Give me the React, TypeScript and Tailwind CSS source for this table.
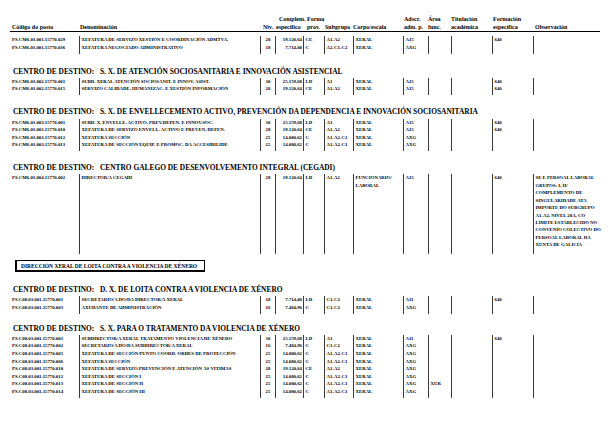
import React from "react";

const GRID =
  "grid grid-cols-[67px_181px_15px_28px_21px_29px_50px_25px_23px_41px_41px_67px]";

type R = {
  code: string;
  den: string;
  niv: string;
  comp: string;
  forma: string;
  sub: string;
  corpo: React.ReactNode;
  adscr: string;
  area?: string;
  tit?: string;
  form?: string;
  obs?: React.ReactNode;
  tall?: boolean;
};

const bar = "border-l border-[#3a3a3a]";

function Row({ r }: { r: R }) {
  const cell = "text-[4.8px] leading-[7.6px] font-bold whitespace-nowrap";
  return (
    <div className={`${GRID} ${r.tall ? "h-[77px]" : "h-[7.6px]"}`}>
      <div className={`${cell}`}>{r.code}</div>
      <div className={`${cell} ${bar} pl-[1.5px]`}>{r.den}</div>
      <div className={`${cell} ${bar} text-center`}>{r.niv}</div>
      <div className={`${cell} ${bar} text-right pr-[1px]`}>{r.comp}</div>
      <div className={`${cell} ${bar} pl-[1.5px]`}>{r.forma}</div>
      <div className={`${cell} ${bar} pl-[1.5px]`}>{r.sub}</div>
      <div className={`${cell} ${bar} pl-[1.5px]`}>{r.corpo}</div>
      <div className={`${cell} ${bar} pl-[1.5px]`}>{r.adscr}</div>
      <div className={`${cell} ${bar} pl-[1.5px]`}>{r.area ?? ""}</div>
      <div className={`${cell} ${bar} pl-[1.5px]`}>{r.tit ?? ""}</div>
      <div className={`${cell} ${bar} pl-[1.5px]`}>{r.form ?? ""}</div>
      <div className={`text-[4.8px] leading-[7.4px] font-bold whitespace-nowrap ${bar} pl-[1.5px]`}>
        {r.obs ?? ""}
      </div>
    </div>
  );
}

function Spacer() {
  return (
    <div className={`${GRID} h-[2.4px]`}>
      <div />
      {Array.from({ length: 11 }).map((_, i) => (
        <div key={i} className={bar} />
      ))}
    </div>
  );
}

function Rows({ rows }: { rows: R[] }) {
  return (
    <div className="mt-[1.2px]">
      {rows.map((r, i) => (
        <Row key={i} r={r} />
      ))}
      <Spacer />
    </div>
  );
}

function Heading({ name, mt }: { name: string; mt: string }) {
  return (
    <div className={`${mt} h-[10px] leading-[10px] text-[7.4px] font-bold pl-[1px] whitespace-nowrap`}>
      <span className="inline-block w-[87px]">CENTRO DE DESTINO:</span>
      <span>{name}</span>
    </div>
  );
}

const HL = "text-[6px] leading-[8px] font-bold whitespace-nowrap";

function Header() {
  return (
    <div className="pt-[15px] ml-[10px] w-[590px] border-b border-black">
      <div className={`${GRID} pl-[2px] items-end`}>
        <div className={HL}>Código do posto</div>
        <div className={`${HL} pl-[1px]`}>Denominación</div>
        <div className={`${HL} pl-[3px]`}>Niv.</div>
        <div>
          <div className={`${HL} pl-[4px]`}>Complem.</div>
          <div className={`${HL} pl-[1px]`}>específico</div>
        </div>
        <div>
          <div className={`${HL} pl-[4px]`}>Forma</div>
          <div className={`${HL} pl-[4px]`}>prov.</div>
        </div>
        <div className={`${HL} pl-[1px]`}>Subgrupo</div>
        <div className={`${HL} pl-[0px]`}>Corpo/escala</div>
        <div>
          <div className={`${HL} pl-[1px]`}>Adscr.</div>
          <div className={`${HL} pl-[1px]`}>adm. p.</div>
        </div>
        <div>
          <div className={HL}>Área</div>
          <div className={HL}>func.</div>
        </div>
        <div>
          <div className={HL}>Titulación</div>
          <div className={HL}>académica</div>
        </div>
        <div>
          <div className={`${HL} pl-[1px]`}>Formación</div>
          <div className={`${HL} pl-[1px]`}>específica</div>
        </div>
        <div className={`${HL} pl-[2px]`}>Observación</div>
      </div>
    </div>
  );
}

const s0: R[] = [
  { code: "PS.CM6.03.001.15770.029", den: "XEFATURA DE SERVIZO XESTIÓN E COORDINACIÓN ADMTVA.", niv: "28", comp: "19.120,64", forma: "CE", sub: "A1-A2", corpo: "XERAL", adscr: "A15", form: "640" },
  { code: "PS.CM6.03.001.15770.036", den: "XEFATURA NEGOCIADO ADMINISTRATIVO", niv: "18", comp: "7.714,00", forma: "C", sub: "A2-C1-C2", corpo: "XERAL", adscr: "AXG" },
];

const s1: R[] = [
  { code: "PS.CM6.03.002.15770.001", den: "SUBD. XERAL ATENCIÓN SOCIOSANIT. E INNOV. ASIST.", niv: "30", comp: "25.159,68", forma: "LD", sub: "A1", corpo: "XERAL", adscr: "A15", form: "640" },
  { code: "PS.CM6.03.002.15770.015", den: "SERVIZO CALIDADE, HUMANIZAC. E XESTIÓN INFORMACIÓN", niv: "28", comp: "19.120,64", forma: "CE", sub: "A1-A2", corpo: "XERAL", adscr: "A15", form: "640" },
];

const s2: R[] = [
  { code: "PS.CM6.03.003.15770.001", den: "SUBD. X. ENVELLE. ACTIVO, PREV.DEPEN. E INNOV.SOC.", niv: "30", comp: "25.159,68", forma: "LD", sub: "A1", corpo: "XERAL", adscr: "A15", form: "640" },
  { code: "PS.CM6.03.003.15770.010", den: "XEFATURA DE SERVIZO ENVELL. ACTIVO E PREVEN. DEFEN.", niv: "28", comp: "19.120,64", forma: "CE", sub: "A1-A2", corpo: "XERAL", adscr: "A15", form: "640" },
  { code: "PS.CM6.03.003.15770.012", den: "XEFATURA SECCIÓN", niv: "25", comp: "14.080,62", forma: "C", sub: "A1-A2-C1", corpo: "XERAL", adscr: "AXG" },
  { code: "PS.CM6.03.003.15770.013", den: "XEFATURA DE SECCIÓN EQUIP. E PROMOC. DA ACCESIBILIDE", niv: "25", comp: "14.080,62", forma: "C", sub: "A1-A2-C1", corpo: "XERAL", adscr: "AXG" },
];

const obsLines = [
  "SE E PERSOAL LABORAL",
  "GRUPOS: I, II/",
  "COMPLEMENTO DE",
  "SINGULARIDADE ATA",
  "IMPORTE DO SUBGRUPO",
  "A1-A2, NIVEL 28A, CO",
  "LÍMITE ESTABLECIDO NO",
  "CONVENIO COLECTIVO DO",
  "PERSOAL LABORAL DA",
  "XUNTA DE GALICIA",
];

const s3: R[] = [
  {
    code: "PS.CM6.03.004.15770.002",
    den: "DIRECTOR/A CEGADI",
    niv: "28",
    comp: "19.120,64",
    forma: "LD",
    sub: "A1-A2",
    corpo: (
      <>
        <div>FUNCIONARIO/</div>
        <div>LABORAL</div>
      </>
    ),
    adscr: "A15",
    form: "640",
    tall: true,
    obs: (
      <>
        {obsLines.map((l) => (
          <div key={l}>{l}</div>
        ))}
      </>
    ),
  },
];

const s4: R[] = [
  { code: "PS.C08.03.001.15770.001", den: "SECRETARIO/A DO/DA DIRECTOR/A XERAL", niv: "18", comp: "7.714,00", forma: "LD", sub: "C1-C2", corpo: "XERAL", adscr: "A11", form: "640" },
  { code: "PS.C08.03.001.15770.003", den: "AXUDANTE DE ADMINISTRACIÓN", niv: "16", comp: "7.484,96", forma: "C", sub: "C1-C2", corpo: "XERAL", adscr: "AXG" },
];

const s5: R[] = [
  { code: "PS.C08.03.001.15770.001", den: "SUBDIRECTOR/A XERAL TRATAMENTO VIOLENCIA DE XÉNERO", niv: "30", comp: "25.159,68", forma: "LD", sub: "A1", corpo: "XERAL", adscr: "A11", form: "640" },
  { code: "PS.C08.03.001.15770.002", den: "SECRETARIO/A DO/DA SUBDIRECTOR/A XERAL", niv: "16", comp: "7.484,96", forma: "C", sub: "C1-C2", corpo: "XERAL", adscr: "AXG" },
  { code: "PS.C08.03.001.15770.005", den: "XEFATURA DE SECCIÓN PUNTO COORD. ORDES DE PROTECCIÓN", niv: "25", comp: "14.080,62", forma: "C", sub: "A1-A2-C1", corpo: "XERAL", adscr: "AXG" },
  { code: "PS.C08.03.001.15770.006", den: "XEFATURA SECCIÓN", niv: "25", comp: "14.080,62", forma: "C", sub: "A1-A2-C1", corpo: "XERAL", adscr: "AXG" },
  { code: "PS.C08.03.001.15770.010", den: "XEFATURA DE SERVIZO PREVENCIÓN E ATENCIÓN ÁS VÍTIMAS", niv: "28", comp: "19.120,64", forma: "CE", sub: "A1-A2", corpo: "XERAL", adscr: "AXG" },
  { code: "PS.C08.03.001.15770.012", den: "XEFATURA DE SECCIÓN I", niv: "25", comp: "14.080,62", forma: "C", sub: "A1-A2-C1", corpo: "XERAL", adscr: "AXG" },
  { code: "PS.C08.03.001.15770.013", den: "XEFATURA DE SECCIÓN II", niv: "25", comp: "14.080,62", forma: "C", sub: "A1-A2-C1", corpo: "XERAL", adscr: "AXG", area: "XUR" },
  { code: "PS.C08.03.001.15770.014", den: "XEFATURA DE SECCIÓN III", niv: "25", comp: "14.080,62", forma: "C", sub: "A1-A2-C1", corpo: "XERAL", adscr: "AXG" },
];

export default function App() {
  return (
    <div className="w-[615px] h-[439px] overflow-hidden bg-white text-black [font-family:'Liberation_Serif','Times_New_Roman',serif]">
      <Header />
      <div className="ml-[12px]">
        <div className="mt-[4px]">
          <Rows rows={s0} />
        </div>
        <Heading mt="mt-[13px]" name="S. X. DE ATENCIÓN SOCIOSANITARIA E INNOVACIÓN ASISTENCIAL" />
        <Rows rows={s1} />
        <Heading mt="mt-[12px]" name="S. X. DE ENVELLECEMENTO ACTIVO, PREVENCIÓN DA DEPENDENCIA E INNOVACIÓN SOCIOSANITARIA" />
        <Rows rows={s2} />
        <Heading mt="mt-[12px]" name="CENTRO GALEGO DE DESENVOLVEMENTO INTEGRAL (CEGADI)" />
        <Rows rows={s3} />
        <div className="mt-[6px] ml-[3px] w-[190px] h-[12px] border border-black border-l-2 border-b-2 text-[5.5px] leading-[10px] font-bold pl-[4px] whitespace-nowrap">
          DIRECCIÓN XERAL DE LOITA CONTRA A VIOLENCIA DE XÉNERO
        </div>
        <Heading mt="mt-[13px]" name="D. X. DE LOITA CONTRA A VIOLENCIA DE XÉNERO" />
        <Rows rows={s4} />
        <Heading mt="mt-[10px]" name="S. X. PARA O TRATAMENTO DA VIOLENCIA DE XÉNERO" />
        <Rows rows={s5} />
      </div>
    </div>
  );
}
